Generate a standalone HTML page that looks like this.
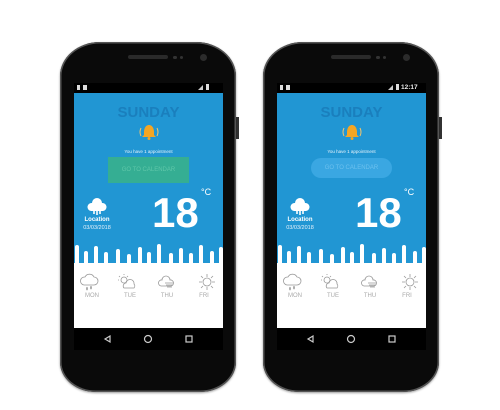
<!DOCTYPE html>
<html><head><style>
body{margin:0;width:500px;height:410px;background:#fff;position:relative;overflow:hidden;font-family:"Liberation Sans",sans-serif}
.ph{position:absolute;top:42px;width:176px;height:350px}
.body{position:absolute;left:0;top:0;width:176px;height:350px;background:#0a0a0a;border-radius:40px 40px 36px 36px/34px 34px 30px 30px;box-shadow:0 0 0 1.5px #555 inset,0 1px 2px rgba(0,0,0,.4)}
.bs{position:absolute;background:#333;width:3px}
.scr{position:absolute;left:14px;top:41px;width:149px;height:267px;background:#fff;overflow:hidden}
.sb{position:absolute;left:0;top:0;width:149px;height:10px;background:#000;color:#fff;font-size:6px}
.blue{position:absolute;left:0;top:10px;width:149px;height:172px;background:#2196d3}
.t{position:absolute;text-align:center;width:149px;left:0}
.nav{position:absolute;left:0;top:245px;width:149px;height:22px;background:#000}
.lbl{position:absolute;font-size:6px;color:#aaa;top:210px;width:30px;text-align:center}
.btn{position:absolute;font-size:6px;text-align:center}
</style></head><body>

<div class="ph" style="left:60px">
 <div class="bs" style="left:176px;top:75px;height:22px"></div>
 <div class="body"></div>
 <div style="position:absolute;left:68px;top:13px;width:40px;height:4px;background:#2a2a2a;border-radius:2px"></div>
 <div style="position:absolute;left:113px;top:14px;width:4px;height:3px;background:#333;border-radius:2px"></div>
 <div style="position:absolute;left:120px;top:14px;width:3px;height:3px;background:#333;border-radius:2px"></div>
 <div style="position:absolute;left:140px;top:12px;width:7px;height:7px;background:#2c2c2c;border-radius:50%"></div>
 <div class="scr">
  <div class="sb"><span style="position:absolute;left:3px;top:2px;width:3px;height:5px;background:#ddd"></span><span style="position:absolute;left:9px;top:2px;width:4px;height:5px;background:#ddd"></span><span style="position:absolute;left:124px;top:2px;width:5px;height:5px;background:#ccc;clip-path:polygon(100% 0,100% 100%,0 100%)"></span><span style="position:absolute;left:132px;top:1px;width:3px;height:6px;background:#ddd"></span></div>
  <div class="blue"></div>
  <svg style="position:absolute;left:0;top:158px" width="149" height="30">
   <g fill="#fff">
    <rect x="0" y="22" width="149" height="10"/>
    <rect x="1" y="4" width="4" height="24" rx="2"/><rect x="10" y="10" width="4" height="24" rx="2"/><rect x="20" y="5" width="4" height="24" rx="2"/><rect x="30" y="11" width="4" height="24" rx="2"/><rect x="42" y="8" width="4" height="24" rx="2"/><rect x="53" y="13" width="4" height="24" rx="2"/><rect x="64" y="6" width="4" height="24" rx="2"/><rect x="73" y="11" width="4" height="24" rx="2"/><rect x="83" y="3" width="4" height="24" rx="2"/><rect x="95" y="12" width="4" height="24" rx="2"/><rect x="105" y="7" width="4" height="24" rx="2"/><rect x="115" y="12" width="4" height="24" rx="2"/><rect x="125" y="4" width="4" height="24" rx="2"/><rect x="136" y="10" width="4" height="24" rx="2"/><rect x="145" y="6" width="4" height="24" rx="2"/>
   </g>
  </svg>
  <div class="t" style="top:21px;font-size:15px;font-weight:bold;color:#1a7fbd">SUNDAY</div>
  <svg style="position:absolute;left:64px;top:41px" width="22" height="16"><path d="M11 1c-3 0-5 3-5 7v3l-2 2h14l-2-2V8c0-4-2-7-5-7z" fill="#f5a623"/><circle cx="11" cy="14.5" r="1.5" fill="#f5a623"/><path d="M3 4q-2 4 0 8M19 4q2 4 0 8" stroke="#f5c46a" fill="none"/></svg>
  <div class="t" style="top:66px;font-size:4.5px;color:#e6f2fb">You have 1 appointment</div>
  <div class="btn" style="left:34px;top:74px;width:81px;height:26px;line-height:26px;background:#35ae93;color:#5fc7a9">GO TO CALENDAR</div>
  <svg style="position:absolute;left:12px;top:114px" width="22" height="20"><path d="M5 14a4 4 0 0 1 1-8 5 5 0 0 1 10 0 4 4 0 0 1 1 8z" fill="#fff"/><path d="M8 13v4M11 13v5M14 13v4" stroke="#fff" stroke-width="1.6"/></svg>
  <div style="position:absolute;left:0;top:134px;width:46px;text-align:center;font-size:6px;font-weight:bold;color:#fff">Location</div>
  <div style="position:absolute;left:-2px;top:142px;width:50px;text-align:center;font-size:5.5px;color:#e6f2fb">03/03/2018</div>
  <div style="position:absolute;left:78px;top:109px;font-size:42px;font-weight:bold;color:#fff;line-height:42px">18</div>
  <div style="position:absolute;left:127px;top:104px;font-size:9px;color:#fff">°C</div>
  <svg style="position:absolute;left:0;top:189px" width="149" height="22" fill="none" stroke="#999" stroke-width=".8">
   <path d="M10 13a4 4 0 0 1 1-8 5 5 0 0 1 9 0 4 4 0 0 1 0 8z"/><path d="M13 15q-1 2 0 3q1-1 0-3M17 14q-1 2 0 3q1-1 0-3"/>
   <circle cx="50" cy="8" r="3"/><path d="M50 2v1M45 4l1 1M44 8h1M54 4l-1 1"/><path d="M50 16a3 3 0 0 1 2-5 4 4 0 0 1 8 1 3 3 0 0 1 0 4z"/>
   <path d="M87 14a3 3 0 0 1 1-6 4 4 0 0 1 8 0 3 3 0 0 1 1 6z"/><path d="M91 11h8M92 13h7M93 15h5"/>
   <circle cx="133" cy="10" r="4"/><path d="M133 2v3M133 15v3M125 10h3M138 10h3M127 4l2 2M139 4l-2 2M127 16l2-2M139 16l-2-2"/>
  </svg>
  <div class="lbl" style="left:3px">MON</div><div class="lbl" style="left:41px">TUE</div><div class="lbl" style="left:78px">THU</div><div class="lbl" style="left:115px">FRI</div>
  <div class="nav"><svg width="149" height="22" fill="none" stroke="#ccc" stroke-width="1.2"><path d="M36 8l-5 3 5 3z"/><circle cx="74" cy="11" r="3.5"/><rect x="112" y="8" width="6" height="6"/></svg></div>
 </div>
</div>

<div class="ph" style="left:263px">
 <div class="bs" style="left:176px;top:75px;height:22px"></div>
 <div class="body"></div>
 <div style="position:absolute;left:68px;top:13px;width:40px;height:4px;background:#2a2a2a;border-radius:2px"></div>
 <div style="position:absolute;left:113px;top:14px;width:4px;height:3px;background:#333;border-radius:2px"></div>
 <div style="position:absolute;left:120px;top:14px;width:3px;height:3px;background:#333;border-radius:2px"></div>
 <div style="position:absolute;left:140px;top:12px;width:7px;height:7px;background:#2c2c2c;border-radius:50%"></div>
 <div class="scr">
  <div class="sb"><span style="position:absolute;left:3px;top:2px;width:3px;height:5px;background:#ddd"></span><span style="position:absolute;left:9px;top:2px;width:4px;height:5px;background:#ddd"></span><span style="position:absolute;left:111px;top:2px;width:5px;height:5px;background:#ccc;clip-path:polygon(100% 0,100% 100%,0 100%)"></span><span style="position:absolute;left:119px;top:1px;width:3px;height:6px;background:#ddd"></span><span style="position:absolute;left:124px;top:1px;font-size:6.5px;font-weight:bold;color:#eee">12:17</span></div>
  <div class="blue"></div>
  <svg style="position:absolute;left:0;top:158px" width="149" height="30">
   <g fill="#fff">
    <rect x="0" y="22" width="149" height="10"/>
    <rect x="1" y="4" width="4" height="24" rx="2"/><rect x="10" y="10" width="4" height="24" rx="2"/><rect x="20" y="5" width="4" height="24" rx="2"/><rect x="30" y="11" width="4" height="24" rx="2"/><rect x="42" y="8" width="4" height="24" rx="2"/><rect x="53" y="13" width="4" height="24" rx="2"/><rect x="64" y="6" width="4" height="24" rx="2"/><rect x="73" y="11" width="4" height="24" rx="2"/><rect x="83" y="3" width="4" height="24" rx="2"/><rect x="95" y="12" width="4" height="24" rx="2"/><rect x="105" y="7" width="4" height="24" rx="2"/><rect x="115" y="12" width="4" height="24" rx="2"/><rect x="125" y="4" width="4" height="24" rx="2"/><rect x="136" y="10" width="4" height="24" rx="2"/><rect x="145" y="6" width="4" height="24" rx="2"/>
   </g>
  </svg>
  <div class="t" style="top:21px;font-size:15px;font-weight:bold;color:#1a7fbd">SUNDAY</div>
  <svg style="position:absolute;left:64px;top:41px" width="22" height="16"><path d="M11 1c-3 0-5 3-5 7v3l-2 2h14l-2-2V8c0-4-2-7-5-7z" fill="#f5a623"/><circle cx="11" cy="14.5" r="1.5" fill="#f5a623"/><path d="M3 4q-2 4 0 8M19 4q2 4 0 8" stroke="#f5c46a" fill="none"/></svg>
  <div class="t" style="top:66px;font-size:4.5px;color:#e6f2fb">You have 1 appointment</div>
  <div class="btn" style="left:34px;top:75px;width:81px;height:20px;line-height:20px;background:#3aa7e2;color:#6cc0ee;border-radius:10px">GO TO CALENDAR</div>
  <svg style="position:absolute;left:12px;top:114px" width="22" height="20"><path d="M5 14a4 4 0 0 1 1-8 5 5 0 0 1 10 0 4 4 0 0 1 1 8z" fill="#fff"/><path d="M8 13v4M11 13v5M14 13v4" stroke="#fff" stroke-width="1.6"/></svg>
  <div style="position:absolute;left:0;top:134px;width:46px;text-align:center;font-size:6px;font-weight:bold;color:#fff">Location</div>
  <div style="position:absolute;left:-2px;top:142px;width:50px;text-align:center;font-size:5.5px;color:#e6f2fb">03/03/2018</div>
  <div style="position:absolute;left:78px;top:109px;font-size:42px;font-weight:bold;color:#fff;line-height:42px">18</div>
  <div style="position:absolute;left:127px;top:104px;font-size:9px;color:#fff">°C</div>
  <svg style="position:absolute;left:0;top:189px" width="149" height="22" fill="none" stroke="#999" stroke-width=".8">
   <path d="M10 13a4 4 0 0 1 1-8 5 5 0 0 1 9 0 4 4 0 0 1 0 8z"/><path d="M13 15q-1 2 0 3q1-1 0-3M17 14q-1 2 0 3q1-1 0-3"/>
   <circle cx="50" cy="8" r="3"/><path d="M50 2v1M45 4l1 1M44 8h1M54 4l-1 1"/><path d="M50 16a3 3 0 0 1 2-5 4 4 0 0 1 8 1 3 3 0 0 1 0 4z"/>
   <path d="M87 14a3 3 0 0 1 1-6 4 4 0 0 1 8 0 3 3 0 0 1 1 6z"/><path d="M91 11h8M92 13h7M93 15h5"/>
   <circle cx="133" cy="10" r="4"/><path d="M133 2v3M133 15v3M125 10h3M138 10h3M127 4l2 2M139 4l-2 2M127 16l2-2M139 16l-2-2"/>
  </svg>
  <div class="lbl" style="left:3px">MON</div><div class="lbl" style="left:41px">TUE</div><div class="lbl" style="left:78px">THU</div><div class="lbl" style="left:115px">FRI</div>
  <div class="nav"><svg width="149" height="22" fill="none" stroke="#ccc" stroke-width="1.2"><path d="M36 8l-5 3 5 3z"/><circle cx="74" cy="11" r="3.5"/><rect x="112" y="8" width="6" height="6"/></svg></div>
 </div>
</div>
</body></html>
